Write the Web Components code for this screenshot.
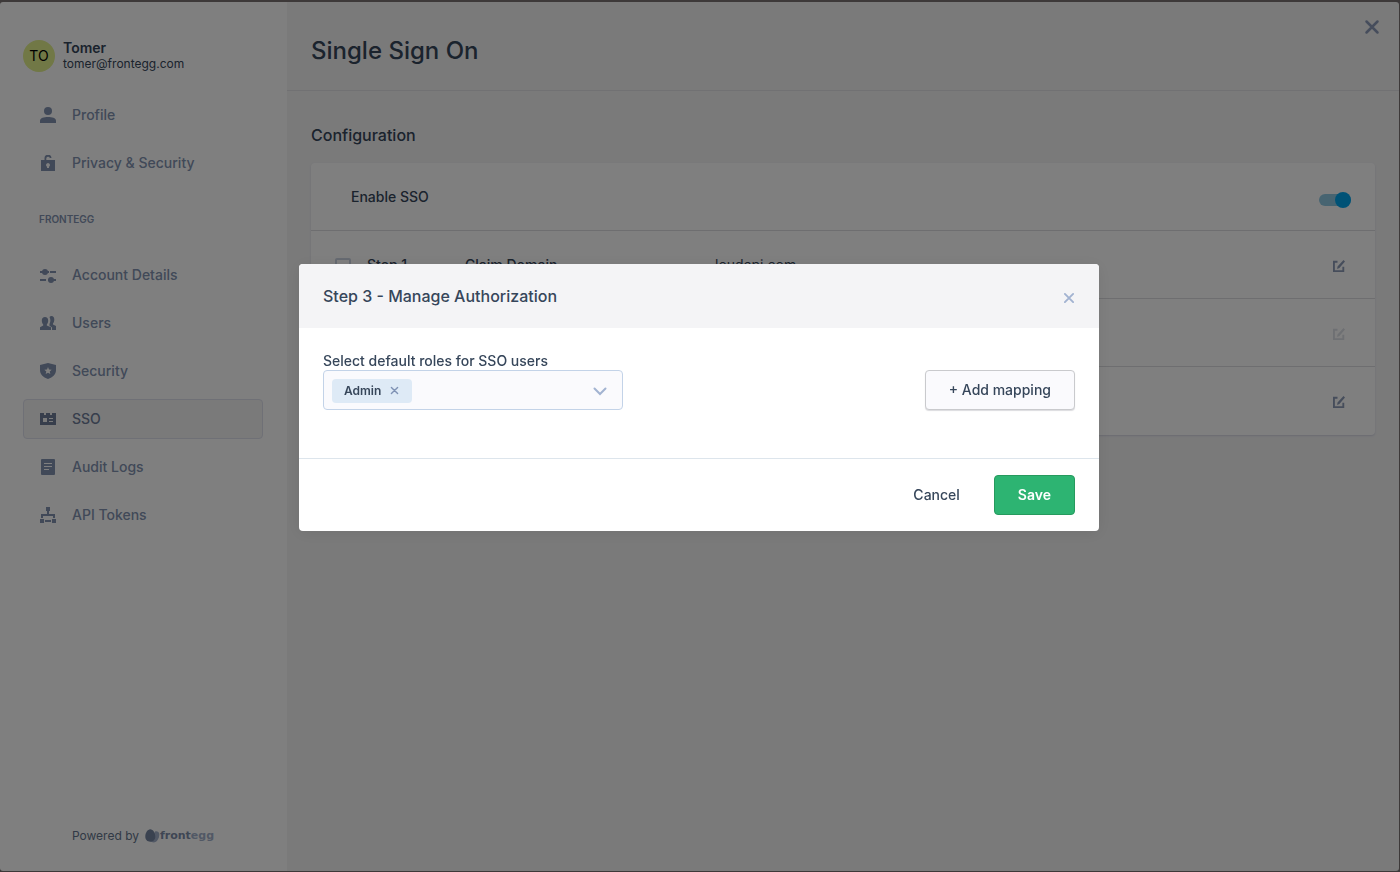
<!DOCTYPE html>
<html lang="en">
    <head>
        <meta charset="UTF-8" />
        <meta name="viewport" content="width=device-width, initial-scale=1.0" />
        <title>Single Sign On</title>
        <style>
            body {
                margin: 0;
                background: #7a7272;
                font-family: Inter, 'Liberation Sans', sans-serif;
                font-size: 14px;
                line-height: 20px;
                color: #36465a;
            }
        </style>
    </head>
    <body>
        <admin-portal>
            <portal-sidebar slot="sidebar">
                <user-card slot="user" initials="TO">
                    <span slot="name">Tomer</span>
                    <span slot="email">tomer@frontegg.com</span>
                </user-card>
                <nav-item icon="person">Profile</nav-item>
                <nav-item icon="lock">Privacy &amp; Security</nav-item>
                <nav-title>FRONTEGG</nav-title>
                <nav-item icon="sliders">Account Details</nav-item>
                <nav-item icon="users">Users</nav-item>
                <nav-item icon="shield">Security</nav-item>
                <nav-item icon="card" active>SSO</nav-item>
                <nav-item icon="log">Audit Logs</nav-item>
                <nav-item icon="tree">API Tokens</nav-item>
                <powered-by slot="footer"></powered-by>
            </portal-sidebar>
            <span slot="title">Single Sign On</span>
            <sso-config></sso-config>
        </admin-portal>
        <modal-dialog>
            <span slot="title">Step 3 - Manage Authorization</span>
            <role-select label="Select default roles for SSO users" value="Admin"></role-select>
            <fe-button>+ Add mapping</fe-button>
            <fe-button slot="actions" kind="text">Cancel</fe-button>
            <fe-button slot="actions" kind="primary">Save</fe-button>
        </modal-dialog>

        <template id="admin-portal">
            <style>
                :host {
                    display: flex;
                    box-sizing: border-box;
                    min-height: 100vh;
                    padding: 2px 1px 1px 0;
                }
                ::slotted([slot='sidebar']) {
                    flex: 0 0 287px;
                    border-radius: 3px 0 0 3px;
                }
                main {
                    position: relative;
                    flex: 1;
                    min-width: 0;
                    background: #f4f4f5;
                    border-radius: 0 3px 3px 0;
                }
                header {
                    padding: 33px 24px 23px;
                    border-bottom: 1px solid #e2e3e6;
                }
                h1 {
                    margin: 0;
                    font-size: 24px;
                    line-height: 32px;
                    font-weight: 500;
                }
                .content {
                    padding: 32px 24px;
                }
                .close {
                    position: absolute;
                    top: 13px;
                    right: 15px;
                    display: flex;
                    padding: 4px;
                    border: 0;
                    background: none;
                    color: #8c9bb8;
                }
            </style>
            <slot name="sidebar"></slot>
            <main>
                <header>
                    <h1><slot name="title"></slot></h1>
                </header>
                <button class="close" aria-label="Close">
                    <fe-icon name="cross" size="16"></fe-icon>
                </button>
                <div class="content"><slot></slot></div>
            </main>
        </template>

        <template id="portal-sidebar">
            <style>
                :host {
                    display: flex;
                    flex-direction: column;
                    box-sizing: border-box;
                    padding: 38px 24px 25px 23px;
                    background: #fff;
                }
                nav {
                    display: flex;
                    flex-direction: column;
                    gap: 8px;
                    margin-top: 23px;
                }
                footer {
                    margin-top: auto;
                }
            </style>
            <slot name="user"></slot>
            <nav><slot></slot></nav>
            <footer><slot name="footer"></slot></footer>
        </template>

        <template id="user-card">
            <style>
                :host {
                    display: flex;
                    gap: 8px;
                    line-height: 16px;
                    height: 32px;
                }
                .avatar {
                    display: grid;
                    place-items: center;
                    width: 32px;
                    height: 32px;
                    border-radius: 50%;
                    background: #e2f08c;
                    color: #000;
                }
                .text {
                    display: flex;
                    flex-direction: column;
                }
                .name {
                    font-weight: 600;
                }
                .email {
                    font-size: 12px;
                }
            </style>
            <div class="avatar"></div>
            <div class="text">
                <div class="name"><slot name="name"></slot></div>
                <div class="email"><slot name="email"></slot></div>
            </div>
        </template>

        <template id="nav-item">
            <style>
                :host {
                    display: block;
                }
                a {
                    display: flex;
                    align-items: center;
                    gap: 16px;
                    height: 38px;
                    padding: 0 16px;
                    border: 1px solid transparent;
                    border-radius: 4px;
                    font-weight: 500;
                    color: #8292b0;
                    text-decoration: none;
                }
                :host([active]) a {
                    background: #f4f4f5;
                    border-color: #dfe0ec;
                    color: #6e7d99;
                }
            </style>
            <a href="#"><fe-icon></fe-icon><slot></slot></a>
        </template>

        <template id="nav-title">
            <style>
                :host {
                    display: block;
                    padding: 0 16px;
                    font-size: 10px;
                    line-height: 56px;
                    font-weight: 600;
                    color: #8292b0;
                }
            </style>
            <slot></slot>
        </template>

        <template id="powered-by">
            <style>
                :host {
                    display: flex;
                    align-items: center;
                    justify-content: center;
                    gap: 6px;
                    font-size: 12px;
                    line-height: 20px;
                    color: #64748c;
                }
                .brand {
                    display: flex;
                    align-items: center;
                    font-family: 'DejaVu Sans', sans-serif;
                    font-size: 11px;
                    font-weight: 700;
                    color: #7c8ca8;
                }
                .egg {
                    color: #a3b1cb;
                }
            </style>
            <span>Powered by</span>
            <span class="brand">
                <svg width="15" height="14" viewBox="0 0 15 14" aria-hidden="true">
                    <path fill="#a3b1cb" d="M10 2.5c2.200-.5 4.300.3 4.300 3 0 3.500-2.300 8-5.800 8-1.300 0-2.500-.5-3-1.200z" />
                    <path fill="#7484a0" d="M5.300.3C8 .3 10.300 4 10.300 7.500c0 3.200-2 5.200-5 5.200s-5-2-5-5.200C.3 4 2.600.3 5.300.3z" />
                </svg>
                <span>front</span><span class="egg">egg</span>
            </span>
        </template>

        <template id="sso-config">
            <style>
                :host {
                    display: block;
                    font-weight: 500;
                }
                h2 {
                    margin: 0 0 16px;
                    font-size: 16px;
                    line-height: 24px;
                    font-weight: 500;
                }
                .card {
                    background: #fff;
                    border-radius: 4px;
                    box-shadow: 0 1px 2px #d4d5e2;
                }
                .row {
                    display: grid;
                    grid-template-columns: 16px 82px 234px 1fr 24px;
                    column-gap: 16px;
                    align-items: center;
                    box-sizing: border-box;
                    height: 68px;
                    padding: 3px 24px 0;
                    border-bottom: 1px solid #dcdde0;
                }
                .row:last-child {
                    border-bottom-color: transparent;
                }
                .enable {
                    display: flex;
                    justify-content: space-between;
                    padding-left: 40px;
                }
                .row label,
                .row span {
                    padding-bottom: 2px;
                }
                .row .domain {
                    font-weight: 400;
                }
                .switch {
                    display: flex;
                    align-items: flex-end;
                    height: 20px;
                }
                .switch input {
                    appearance: none;
                    position: relative;
                    width: 32px;
                    height: 16px;
                    margin: 0;
                }
                .switch input::before {
                    content: '';
                    position: absolute;
                    inset: 2px 0;
                    border-radius: 6px;
                    background: #8fc9e3;
                }
                .switch input::after {
                    content: '';
                    position: absolute;
                    right: 0;
                    width: 16px;
                    height: 16px;
                    border-radius: 50%;
                    background: #00a5ed;
                }
                .check {
                    appearance: none;
                    box-sizing: border-box;
                    width: 16px;
                    height: 16px;
                    margin: 0;
                    border: 2px solid #ccd4e2;
                    border-radius: 2px;
                }
                button {
                    grid-column: 5;
                    display: grid;
                    place-items: center;
                    width: 24px;
                    height: 24px;
                    padding: 0;
                    border: 0;
                    background: none;
                    color: #8c9bb7;
                }
                button:disabled {
                    color: #dde0e6;
                }
            </style>
            <h2>Configuration</h2>
            <div class="card">
                <div class="row enable">
                    <label for="enable">Enable SSO</label>
                    <div class="switch"><input type="checkbox" id="enable" role="switch" checked /></div>
                </div>
                <div class="row">
                    <input class="check" type="checkbox" id="step1" />
                    <label for="step1">Step 1</label>
                    <span>Claim Domain</span>
                    <span class="domain">loudapi.com</span>
                    <button aria-label="Edit step 1"><fe-icon name="edit" size="12"></fe-icon></button>
                </div>
                <div class="row">
                    <button aria-label="Edit step 2" disabled><fe-icon name="edit" size="12"></fe-icon></button>
                </div>
                <div class="row">
                    <button aria-label="Edit step 3"><fe-icon name="edit" size="12"></fe-icon></button>
                </div>
            </div>
        </template>

        <template id="modal-dialog">
            <style>
                :host {
                    position: fixed;
                    inset: 0;
                    display: flex;
                    align-items: center;
                    justify-content: center;
                    padding: 0 2px 77px 0;
                    background: rgba(0, 0, 0, 0.5);
                }
                section {
                    width: 800px;
                    max-width: 100%;
                    background: #fff;
                    border-radius: 4px;
                    box-shadow: 0 2px 16px rgba(0, 0, 0, 0.08);
                    overflow: hidden;
                }
                header {
                    display: flex;
                    align-items: center;
                    justify-content: space-between;
                    padding: 20px 24px;
                    background: #f4f4f6;
                }
                h2 {
                    margin: 0;
                    font-size: 16px;
                    line-height: 24px;
                    font-weight: 500;
                }
                header button {
                    display: flex;
                    padding: 4px 0 0;
                    border: 0;
                    background: none;
                    color: #a2b3d1;
                }
                .body {
                    display: flex;
                    align-items: flex-end;
                    justify-content: space-between;
                    padding: 24px 24px 48px;
                }
                footer {
                    display: flex;
                    justify-content: flex-end;
                    gap: 10px;
                    padding: 16px 24px;
                    border-top: 1px solid #dde5ec;
                }
            </style>
            <section role="dialog" aria-labelledby="title">
                <header>
                    <h2 id="title"><slot name="title"></slot></h2>
                    <button aria-label="Close"><fe-icon name="cross" size="12"></fe-icon></button>
                </header>
                <div class="body"><slot></slot></div>
                <footer><slot name="actions"></slot></footer>
            </section>
        </template>

        <template id="role-select">
            <style>
                :host {
                    display: block;
                    width: 300px;
                    font-weight: 500;
                }
                label {
                    display: block;
                    line-height: 18px;
                }
                .field {
                    display: flex;
                    align-items: center;
                    box-sizing: border-box;
                    height: 40px;
                    padding: 1px 14px 0 8px;
                    border: 1px solid #c3d3e8;
                    border-radius: 4px;
                    background: #fafafd;
                }
                .chip {
                    display: flex;
                    align-items: center;
                    gap: 9px;
                    height: 24px;
                    padding: 0 13px 0 12px;
                    border-radius: 4px;
                    background: #deeaf6;
                    font-size: 12px;
                    font-weight: 600;
                }
                input {
                    flex: 1;
                    min-width: 0;
                    padding: 0 8px;
                    border: 0;
                    outline: 0;
                    background: none;
                    font: inherit;
                    color: inherit;
                }
                button {
                    display: flex;
                    padding: 0;
                    border: 0;
                    background: none;
                    color: #a2b3d1;
                }
                .chip button {
                    color: #7f92b4;
                }
            </style>
            <label for="roles"></label>
            <div class="field">
                <span class="chip">
                    <span class="value"></span>
                    <button aria-label="Remove role"><fe-icon name="cross" size="9"></fe-icon></button>
                </span>
                <input id="roles" role="combobox" aria-expanded="false" />
                <button aria-label="Open roles"><fe-icon name="chevron" size="16"></fe-icon></button>
            </div>
        </template>

        <template id="fe-button">
            <style>
                :host {
                    display: inline-block;
                }
                button {
                    height: 40px;
                    padding: 0 23px;
                    border: 1px solid #c9cacd;
                    border-radius: 4px;
                    background: #fafafd;
                    box-shadow: 0 1px 1px #dcdcdf;
                    font: inherit;
                    font-weight: 500;
                    color: inherit;
                }
                :host([kind='text']) button {
                    border-color: transparent;
                    background: none;
                    box-shadow: none;
                }
                :host([kind='primary']) button {
                    border-color: #269a5e;
                    background: #2db472;
                    box-shadow: none;
                    font-weight: 600;
                    color: #fff;
                }
            </style>
            <button><slot></slot></button>
        </template>

        <script>
            const ICONS = {
                person: '<circle cx="8" cy="4" r="4"/><path d="M0 16v-2.500C0 11 4 10 8 10s8 1 8 3.500V16z"/>',
                lock: '<path fill-rule="evenodd" d="M1 5h3.500V3.500a3.500 3.500 0 0 1 7-.5H9.800a1.800 1.800 0 0 0-3.500.5V5H15v11H1zm7 3a2 2 0 0 0-1 3.700V13h2v-1.300A2 2 0 0 0 8 8z"/>',
                sliders:
                    '<path d="M0 4h3v2H0zM7 4h2v2H7zM10 4h6v2h-6zM0 12h6v2H0zM8 12h8v2H8z"/><circle cx="5" cy="5" r="3"/><circle cx="11" cy="13" r="3"/>',
                users:
                    '<path d="M9.500 2C10 1.300 10.700 1 11.500 1c1.800 0 2.800 1.500 2.800 3.500 0 1.800-.5 3-1.300 4v1l3 1.500v4h-4v-2.500l-2.500-1.800V9c.6-1 .9-2.300.9-3.500S10.100 3 9.500 2z"/><path d="M5 2c2 0 3.200 1.300 3.200 3.500 0 1.800-.6 3.200-1.400 4v1l4.200 1.800V15H0v-2.700l3.200-1.800v-1c-.8-.8-1.400-2.200-1.400-4C1.800 3.300 3 2 5 2z"/>',
                shield:
                    '<path fill-rule="evenodd" d="M8 0l8 2v5c0 4-3 7.500-8 9-5-1.500-8-5-8-9V2zm0 4L7 6.500l-2.700.2 2 1.800-.6 2.600L8 9.700l2.300 1.400-.6-2.600 2-1.800L9 6.500z"/>',
                card: '<path fill-rule="evenodd" d="M0 2h4v2h2V2h4v2h2V2h4v12H0zm3 5v4h4V7zm6 0v1h4V7zm0 3v1h4v-1z"/>',
                log: '<path fill-rule="evenodd" d="M2 0h12a1 1 0 0 1 1 1v14a1 1 0 0 1-1 1H2a1 1 0 0 1-1-1V1a1 1 0 0 1 1-1zm2 4v1h8V4zm0 3v1h8V7zm0 3v1h5v-1z"/>',
                tree: '<path d="M6 0h4v4H9v3h6v4h-2V9H3v2H1V7h6V4H6zM0 12h4v4H0zM12 12h4v4h-4zM5 13h6v2H5z"/>',
                cross: '<path d="M2.500 2.500l11 11M13.500 2.500l-11 11" fill="none" stroke="currentColor" stroke-width="2.500" stroke-linecap="round"/>',
                chevron: '<path d="M2.500 5.500L8 11l5.500-5.500" fill="none" stroke="currentColor" stroke-width="2" stroke-linecap="round"/>',
                edit: '<path d="M0 1h6v2.500H2.500v10h10V9H15v7H0zM14 0l2 2-7.500 8.500L5.500 12 6 8.500z"/>'
            }

            function fromTemplate(el, id) {
                const content = document.querySelector('#' + id).content
                const root = el.attachShadow({ mode: 'open' })
                root.appendChild(document.importNode(content, true))
                return root
            }

            customElements.define(
                'fe-icon',
                class extends HTMLElement {
                    static get observedAttributes() {
                        return ['name', 'size']
                    }
                    constructor() {
                        super()
                        this.attachShadow({ mode: 'open' })
                    }
                    attributeChangedCallback() {
                        const size = this.getAttribute('size') || 16
                        this.shadowRoot.innerHTML = `
                            <style>:host { display: inline-flex; } svg { fill: currentColor; }</style>
                            <svg width="${size}" height="${size}" viewBox="0 0 16 16" aria-hidden="true">
                                ${ICONS[this.getAttribute('name')] || ''}
                            </svg>`
                    }
                }
            )

            // elements that only need their template
            const plain = [
                'admin-portal',
                'portal-sidebar',
                'nav-title',
                'powered-by',
                'sso-config',
                'modal-dialog',
                'fe-button'
            ]
            plain.forEach((name) => {
                customElements.define(
                    name,
                    class extends HTMLElement {
                        constructor() {
                            super()
                            fromTemplate(this, name)
                        }
                    }
                )
            })

            customElements.define(
                'user-card',
                class extends HTMLElement {
                    constructor() {
                        super()
                        const root = fromTemplate(this, 'user-card')
                        root.querySelector('.avatar').textContent = this.getAttribute('initials')
                    }
                }
            )

            customElements.define(
                'nav-item',
                class extends HTMLElement {
                    constructor() {
                        super()
                        const root = fromTemplate(this, 'nav-item')
                        root.querySelector('fe-icon').setAttribute('name', this.getAttribute('icon'))
                        if (this.hasAttribute('active')) {
                            root.querySelector('a').setAttribute('aria-current', 'page')
                        }
                    }
                }
            )

            customElements.define(
                'role-select',
                class extends HTMLElement {
                    constructor() {
                        super()
                        const root = fromTemplate(this, 'role-select')
                        root.querySelector('label').textContent = this.getAttribute('label')
                        root.querySelector('.value').textContent = this.getAttribute('value')
                    }
                }
            )
        </script>
    </body>
</html>
